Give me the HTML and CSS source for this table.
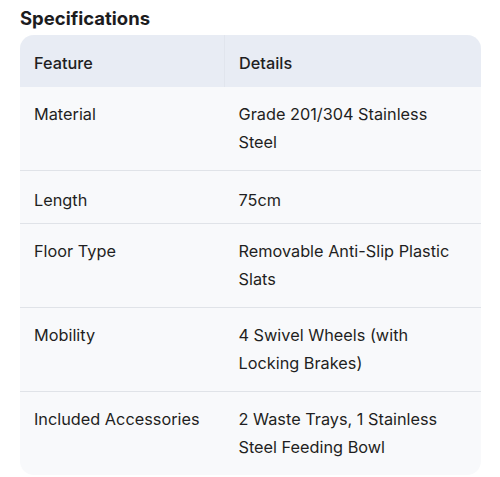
FILE: index.html
```html
<!DOCTYPE html>
<html>
<head>
<meta charset="utf-8">
<link rel="stylesheet" href="styles.css">
</head>
<body>
<div class="page">
  <h2 class="title">Specifications</h2>
  <div class="card">
    <table class="spec">
      <thead>
        <tr><th>Feature</th><th>Details</th></tr>
      </thead>
      <tbody>
        <tr><td>Material</td><td>Grade 201/304 Stainless Steel</td></tr>
        <tr class="single"><td>Length</td><td>75cm</td></tr>
        <tr><td>Floor Type</td><td>Removable Anti-Slip Plastic Slats</td></tr>
        <tr><td>Mobility</td><td>4 Swivel Wheels (with Locking Brakes)</td></tr>
        <tr><td>Included Accessories</td><td>2 Waste Trays, 1 Stainless Steel Feeding Bowl</td></tr>
      </tbody>
    </table>
  </div>
</div>
</body>
</html>
```
FILE: styles.css
```css
html, body {
  margin: 0;
  padding: 0;
  background: #ffffff;
}
.page {
  padding: 7px 19px 0 20px;
  font-family: Inter, "Noto Sans", sans-serif;
  color: #1f1f22;
}
.title {
  margin: 0 0 6px 0;
  font-size: 18.5px;
  font-weight: 700;
  line-height: 22px;
  color: #1c1c1e;
}
.card {
  border-radius: 14px;
  overflow: hidden;
  background: #f8f9fb;
}
.spec {
  width: 100%;
  border-collapse: collapse;
  font-size: 16.3px;
}
.spec th, .spec td {
  text-align: left;
  vertical-align: top;
  padding: 13px 14px 14px 14px;
  line-height: 28px;
  font-weight: 400;
}
.spec th:first-child, .spec td:first-child {
  width: 176px;
}
.spec thead th {
  background: #e8ecf4;
  font-weight: 500;
  padding-top: 14px;
  padding-bottom: 10px;
}
.spec thead th:first-child {
  border-right: 1px solid #e1e5ed;
}
.spec tbody tr + tr td {
  border-top: 1px solid #e0e3e8;
}
.spec tbody tr.single td {
  padding-top: 15px;
  padding-bottom: 9px;
}
```
